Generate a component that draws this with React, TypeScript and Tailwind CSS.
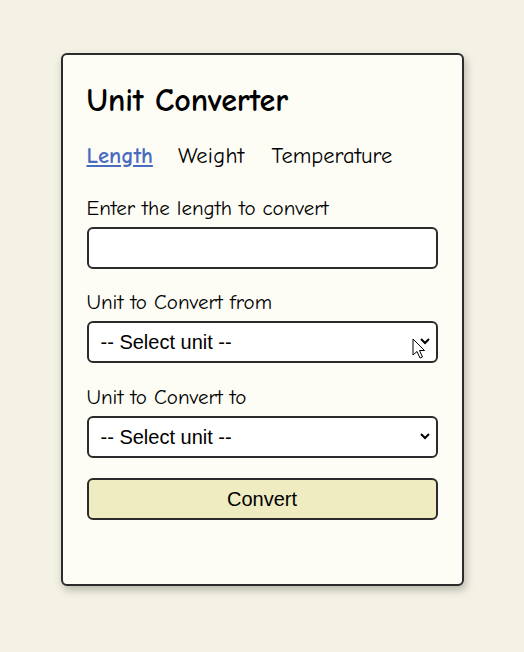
import React from "react";

export default function App() {
  return (
    <div className="min-h-[652px] w-full bg-[#f3f2e4] pt-[53px] flex justify-center font-['Comic_Sans_MS','Comic_Neue',cursive]">
      <div className="relative w-[403px] h-[533px] bg-[#fdfdf6] border-2 border-[#2b2b2b] rounded-md shadow-[2px_4px_8px_rgba(0,0,0,0.25)] px-6 pt-[26px]">
        <h1 className="text-[32px] font-bold text-black leading-[40px]">Unit Converter</h1>
        <div className="flex mt-[20px] text-[22.5px] leading-[30px]">
          <span className="text-[#4a6cc0] font-bold underline">Length</span>
          <span className="ml-[25px] text-black tracking-[0.3px]">Weight</span>
          <span className="ml-[27px] text-black">Temperature</span>
        </div>
        <div className="mt-[25px] flex flex-col">
          <label className="text-[21px] leading-[24px] text-black">Enter the length to convert</label>
          <input className="mt-[7px] h-[42px] w-full border-2 border-[#2b2b2b] rounded-md bg-white outline-none" />
          <label className="mt-[21px] text-[21px] leading-[24px] text-black">Unit to Convert from</label>
          <div className="relative mt-[7px] h-[42px] w-full border-2 border-[#2b2b2b] rounded-md bg-white flex items-center px-3 font-['Liberation_Sans',Arial,sans-serif] text-[20px] text-black">
            <span>-- Select unit --</span>
            <svg className="absolute right-[6px] top-[15px]" width="10" height="7" viewBox="0 0 10 7"><path d="M1 1l4 4 4-4" fill="none" stroke="#000" strokeWidth="2" /></svg>
          </div>
          <label className="mt-[22px] text-[21px] leading-[24px] text-black">Unit to Convert to</label>
          <div className="relative mt-[7px] h-[42px] w-full border-2 border-[#2b2b2b] rounded-md bg-white flex items-center px-3 font-['Liberation_Sans',Arial,sans-serif] text-[20px] text-black">
            <span>-- Select unit --</span>
            <svg className="absolute right-[6px] top-[15px]" width="10" height="7" viewBox="0 0 10 7"><path d="M1 1l4 4 4-4" fill="none" stroke="#000" strokeWidth="2" /></svg>
          </div>
          <button className="mt-[20px] h-[42px] w-full border-2 border-[#2b2b2b] rounded-md bg-[#eeecc0] font-['Liberation_Sans',Arial,sans-serif] text-[20px] text-black">Convert</button>
        </div>
        <svg className="absolute left-[349px] top-[283px]" width="14" height="22" viewBox="0 0 14 22">
          <path d="M1 1 L1 17 L5 13.5 L8 20 L10.5 19 L7.5 12.5 L12.5 12.5 Z" fill="#fff" stroke="#000" strokeWidth="1" strokeLinejoin="round" />
        </svg>
      </div>
    </div>
  );
}
